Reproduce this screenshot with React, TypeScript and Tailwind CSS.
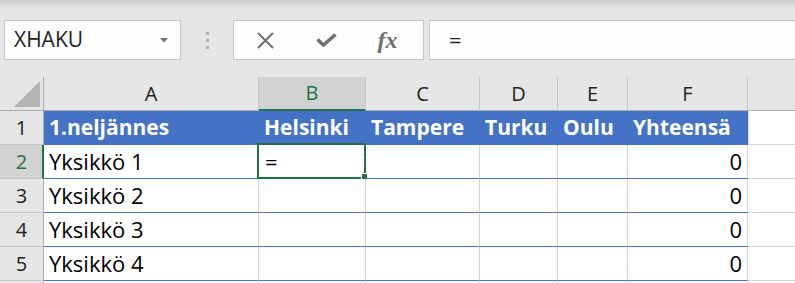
const cols = [
  { key: 'A', w: 'w-[215px]' },
  { key: 'B', w: 'w-[107px]' },
  { key: 'C', w: 'w-[114px]' },
  { key: 'D', w: 'w-[78px]' },
  { key: 'E', w: 'w-[70px]' },
  { key: 'F', w: 'w-[120px]' },
];

const heads = ['1.neljännes', 'Helsinki', 'Tampere', 'Turku', 'Oulu', 'Yhteensä'];
const units = ['Yksikkö 1', 'Yksikkö 2', 'Yksikkö 3', 'Yksikkö 4'];

function RowHead({ n, active }: { n?: number; active?: boolean }) {
  return (
    <div
      className={
        'w-[44px] shrink-0 flex items-center justify-center border-b border-[#c6c6c6] text-[20px] ' +
        (active
          ? 'bg-[#d2d2d2] text-[#217346] border-r-2 border-r-[#217346] pl-[1px]'
          : 'bg-[#e6e6e6] text-[#222] border-r border-r-[#ababab]')
      }
    >
      {n}
    </div>
  );
}

export default function App() {
  return (
    <div className="w-[795px] h-[283px] overflow-hidden bg-white font-['Open_Sans',sans-serif] select-none">
      {/* formula bar */}
      <div className="h-[77px] pt-[20px] flex items-start overflow-hidden bg-[linear-gradient(to_bottom,#cdc9c5_0px,#d3d3d3_2px,#e6e6e6_9px)]">
        <div className="ml-[4px] w-[177px] shrink-0 h-[40px] border border-[#c6c6c6] bg-[#fdfdfd] flex items-center pl-[9px] pr-[12px]">
          <span className="flex-1 text-[21px] text-[#222]">XHAKU</span>
          <svg width="8" height="5" viewBox="0 0 8 5">
            <path d="M0 0H8L4 4.5Z" fill="#707070" />
          </svg>
        </div>
        <div className="w-[52px] shrink-0 h-[40px] flex flex-col items-center justify-center gap-[4px] pl-[1px]">
          <div className="w-[3px] h-[3px] bg-[#b4b4b4]" />
          <div className="w-[3px] h-[3px] bg-[#b4b4b4]" />
          <div className="w-[3px] h-[3px] bg-[#b4b4b4]" />
        </div>
        <div className="w-[191px] shrink-0 h-[40px] border border-[#c6c6c6] bg-[#fdfdfd] flex items-center">
          <div className="w-[62px] flex justify-center pl-[1px]">
            <svg width="17" height="17" viewBox="0 0 17 17">
              <path d="M1 1L16 16M16 1L1 16" stroke="#707070" strokeWidth="2" />
            </svg>
          </div>
          <div className="w-[60px] flex justify-center">
            <svg width="21" height="14" viewBox="0 0 21 14">
              <path d="M1.5 6.5L7.5 12L19.5 1.5" stroke="#707070" strokeWidth="3.6" fill="none" />
            </svg>
          </div>
          <div className="flex-1 flex justify-center pr-[4px]">
            <span className="font-['Liberation_Serif',serif] italic font-semibold text-[24px] text-[#707070] leading-none">
              fx
            </span>
          </div>
        </div>
        <div className="ml-[5px] w-[400px] shrink-0 h-[40px] border border-[#c6c6c6] bg-[#fdfdfd] flex items-center pl-[19px] pb-[1px]">
          <span className="text-[22px] text-[#222]">=</span>
        </div>
      </div>

      {/* column headers */}
      <div className="flex h-[34px] bg-[#e6e6e6]">
        <div className="w-[44px] shrink-0 relative border-r border-[#ababab] border-b border-b-[#ababab]">
          <svg className="absolute right-[3px] bottom-[3px]" width="26" height="26" viewBox="0 0 26 26">
            <path d="M26 0V26H0Z" fill="#b4b4b4" />
          </svg>
        </div>
        {cols.map((c) => (
          <div
            key={c.key}
            className={
              c.w +
              ' shrink-0 flex items-center justify-center text-[20px] border-r border-[#c6c6c6] ' +
              (c.key === 'B'
                ? 'bg-[#d2d2d2] text-[#217346] border-b-2 border-b-[#217346]'
                : 'text-[#222] border-b border-b-[#ababab]')
            }
          >
            {c.key}
          </div>
        ))}
        <div className="flex-1 border-b border-[#ababab]" />
      </div>

      {/* row 1 */}
      <div className="flex h-[34px]">
        <RowHead n={1} />
        {cols.map((c, i) => (
          <div
            key={c.key}
            className={
              c.w +
              ' shrink-0 bg-[#4472c4] border-b border-[#4472c4] flex items-center px-[5px] text-[21px] font-bold text-white whitespace-nowrap overflow-visible'
            }
          >
            {heads[i]}
          </div>
        ))}
        <div className="flex-1 border-b border-[#d4d4d4] border-l border-l-[#d4d4d4]" />
      </div>

      {/* data rows */}
      {units.map((u, r) => (
        <div key={u} className="flex h-[34px]">
          <RowHead n={r + 2} active={r === 0} />
          {cols.map((c, i) => (
            <div
              key={c.key}
              className={
                c.w +
                ' shrink-0 relative border-b border-b-[#4472c4] border-r border-r-[#d4d4d4] flex items-center px-[5px] text-[22px] text-black whitespace-nowrap ' +
                (i === 5 ? 'justify-end' : '')
              }
            >
              {i === 0 && u}
              {i === 1 && r === 0 && (
                <>
                  <span className="pl-[1px]">=</span>
                  <div className="absolute left-[-2px] top-[-2px] w-[109px] h-[36px] border-2 border-[#217346]" />
                  <div className="absolute right-[-3px] bottom-[-2px] w-[7px] h-[7px] bg-[#217346] border border-white" />
                </>
              )}
              {i === 5 && '0'}
            </div>
          ))}
          <div className="flex-1 border-b border-[#d4d4d4]" />
        </div>
      ))}

      {/* row 6 (cut off) */}
      <div className="flex h-[34px]">
        <RowHead />
        {cols.map((c) => (
          <div key={c.key} className={c.w + ' shrink-0 border-r border-[#d4d4d4]'} />
        ))}
      </div>
    </div>
  );
}
